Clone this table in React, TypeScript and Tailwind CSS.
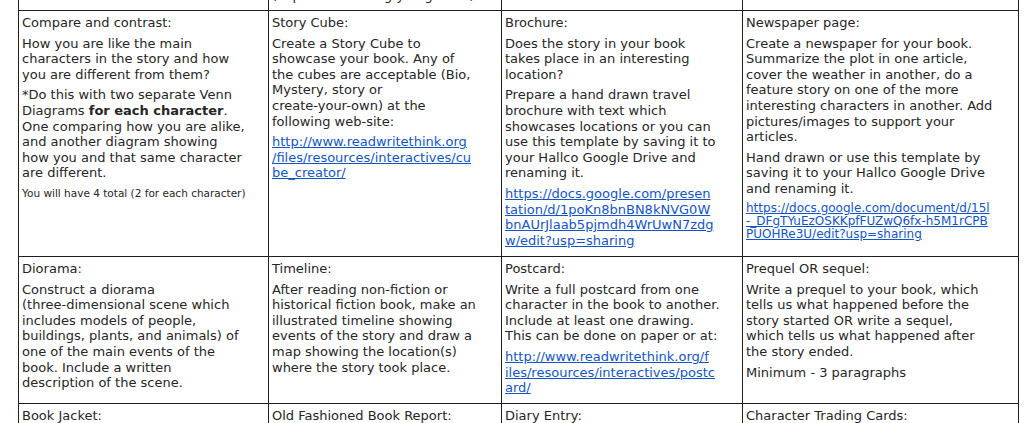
import React from "react";

type Block = { text: string[]; link?: boolean; small?: boolean; bold?: [number, string] };

type Cell = { title: string; blocks: Block[] };

const row1: Cell[] = [
  {
    title: "Compare and contrast:",
    blocks: [
      { text: ["How you are like the main", "characters in the story and how", "you are different from them?"] },
      {
        text: [
          "*Do this with two separate Venn",
          "Diagrams ",
          "One comparing how you are alike,",
          "and another diagram showing",
          "how you and that same character",
          "are different.",
        ],
        bold: [1, "for each character"],
      },
      { text: ["You will have 4 total (2 for each character)"], small: true },
    ],
  },
  {
    title: "Story Cube:",
    blocks: [
      {
        text: [
          "Create a Story Cube to",
          "showcase your book. Any of",
          "the cubes are acceptable (Bio,",
          "Mystery, story or",
          "create-your-own) at the",
          "following web-site:",
        ],
      },
      { text: ["http://www.readwritethink.org", "/files/resources/interactives/cu", "be_creator/"], link: true },
    ],
  },
  {
    title: "Brochure:",
    blocks: [
      { text: ["Does the story in your book", "takes place in an interesting", "location?"] },
      {
        text: [
          "Prepare a hand drawn travel",
          "brochure with text which",
          "showcases locations or you can",
          "use this template by saving it to",
          "your Hallco Google Drive and",
          "renaming it.",
        ],
      },
      {
        text: [
          "https://docs.google.com/presen",
          "tation/d/1poKn8bnBN8kNVG0W",
          "bnAUrJlaab5pjmdh4WrUwN7zdg",
          "w/edit?usp=sharing",
        ],
        link: true,
      },
    ],
  },
  {
    title: "Newspaper page:",
    blocks: [
      {
        text: [
          "Create a newspaper for your book.",
          "Summarize the plot in one article,",
          "cover the weather in another, do a",
          "feature story on one of the more",
          "interesting characters in another. Add",
          "pictures/images to support your",
          "articles.",
        ],
      },
      { text: ["Hand drawn or use this template by", "saving it to your Hallco Google Drive", "and renaming it."] },
      {
        text: [
          "https://docs.google.com/document/d/15l",
          "-_DFgTYuEzOSKKpfFUZwQ6fx-h5M1rCPB",
          "PUOHRe3U/edit?usp=sharing",
        ],
        link: true,
        small: true,
      },
    ],
  },
];

const row2: Cell[] = [
  {
    title: "Diorama:",
    blocks: [
      {
        text: [
          "Construct a diorama",
          "(three-dimensional scene which",
          "includes models of people,",
          "buildings, plants, and animals) of",
          "one of the main events of the",
          "book. Include a written",
          "description of the scene.",
        ],
      },
    ],
  },
  {
    title: "Timeline:",
    blocks: [
      {
        text: [
          "After reading non-fiction or",
          "historical fiction book, make an",
          "illustrated timeline showing",
          "events of the story and draw a",
          "map showing the location(s)",
          "where the story took place.",
        ],
      },
    ],
  },
  {
    title: "Postcard:",
    blocks: [
      {
        text: [
          "Write a full postcard from one",
          "character in the book to another.",
          "Include at least one drawing.",
          "This can be done on paper or at:",
        ],
      },
      { text: ["http://www.readwritethink.org/f", "iles/resources/interactives/postc", "ard/"], link: true },
    ],
  },
  {
    title: "Prequel OR sequel:",
    blocks: [
      {
        text: [
          "Write a prequel to your book, which",
          "tells us what happened before the",
          "story started OR write a sequel,",
          "which tells us what happened after",
          "the story ended.",
        ],
      },
      { text: ["Minimum - 3 paragraphs"] },
    ],
  },
];

const row3 = ["Book Jacket:", "Old Fashioned Book Report:", "Diary Entry:", "Character Trading Cards:"];

const BlockView = ({ b }: { b: Block }) => {
  let cls = "mt-[5px] whitespace-nowrap";
  if (b.link && b.small) cls += " text-[12px] leading-[13.3px] text-[#1155cc] underline";
  else if (b.small) cls += " text-[10.5px] leading-[15px]";
  else if (b.link) cls += " text-[#1155cc] underline";
  return (
    <p className={cls}>
      {b.text.map((line, i) => (
        <React.Fragment key={i}>
          {line}
          {b.bold && b.bold[0] === i && (
            <>
              <b>{b.bold[1]}</b>.
            </>
          )}
          {i < b.text.length - 1 && <br />}
        </React.Fragment>
      ))}
    </p>
  );
};

const CellView = ({ c }: { c: Cell }) => (
  <td className="border border-[#1f1f1f] align-top pl-[3px] pt-[4px]">
    <p className="whitespace-nowrap">{c.title}</p>
    {c.blocks.map((b, i) => (
      <BlockView key={i} b={b} />
    ))}
  </td>
);

export default function App() {
  return (
    <div className="h-[423px] w-[1028px] overflow-hidden bg-white font-['DejaVu_Sans',sans-serif] text-[13px] leading-[15.6px] text-[#262626]">
      <table className="ml-[18px] mt-[-20px] w-[1000px] table-fixed border-collapse">
        <colgroup>
          <col className="w-[250px]" />
          <col className="w-[233px]" />
          <col className="w-[241px]" />
          <col className="w-[276px]" />
        </colgroup>
        <tbody>
          <tr className="h-[30px]">
            <td className="border border-[#1f1f1f]"></td>
            <td className="border border-[#1f1f1f] align-top pl-[3px] pt-[7px]">
              <p className="whitespace-nowrap">(explain the rating you gave it)</p>
            </td>
            <td className="border border-[#1f1f1f]"></td>
            <td className="border border-[#1f1f1f]"></td>
          </tr>
          <tr className="h-[246px]">
            {row1.map((c, i) => (
              <CellView key={i} c={c} />
            ))}
          </tr>
          <tr className="h-[147px]">
            {row2.map((c, i) => (
              <CellView key={i} c={c} />
            ))}
          </tr>
          <tr className="h-[60px]">
            {row3.map((t, i) => (
              <td key={i} className="border border-[#1f1f1f] align-top pl-[3px] pt-[4px]">
                <p className="whitespace-nowrap">{t}</p>
              </td>
            ))}
          </tr>
        </tbody>
      </table>
    </div>
  );
}
